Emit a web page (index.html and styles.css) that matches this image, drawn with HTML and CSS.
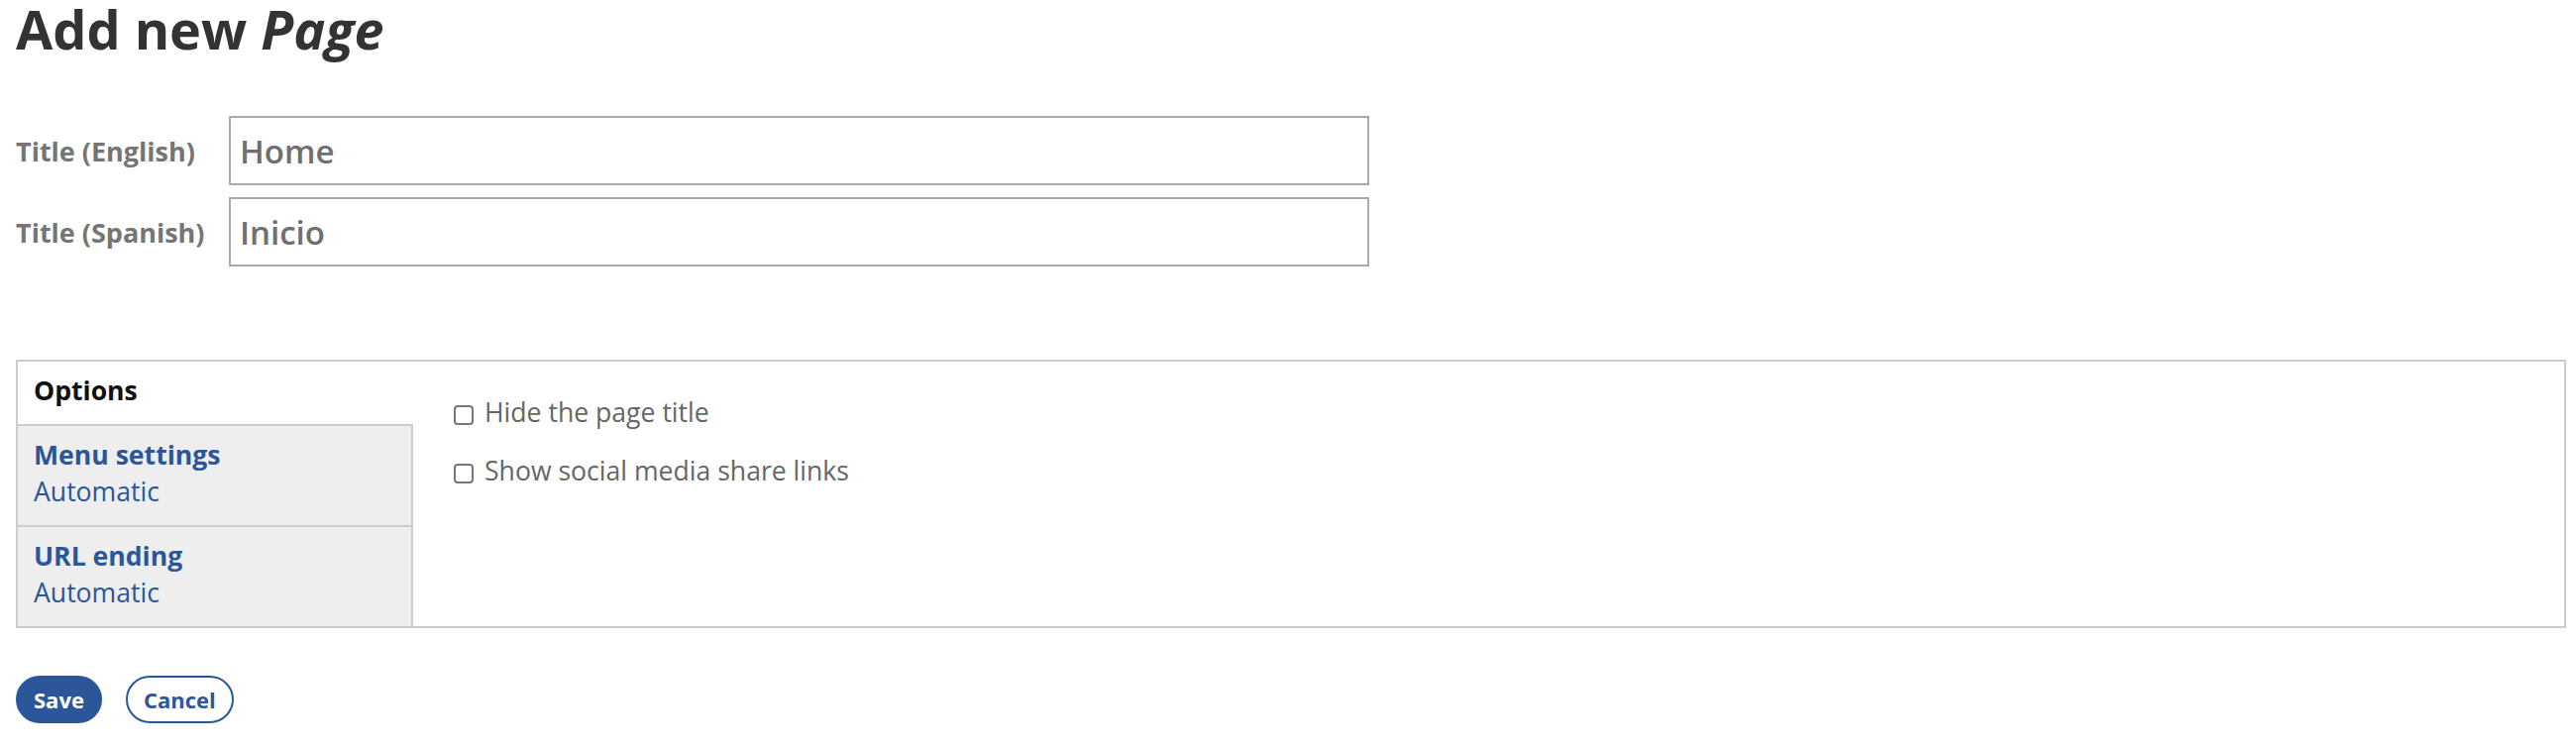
FILE: index.html
```html
<!DOCTYPE html>
<html lang="en">
<head>
  <meta charset="UTF-8" />
  <meta name="viewport" content="width=device-width, initial-scale=1.0"/>
  <title>Add new Page</title>
  <link rel="stylesheet" href="styles.css">
</head>
<body>
  <h1>Add new <em>Page</em></h1>

  <div class="titles">
    <div class="field">
      <label for="title-en">Title (English)</label>
      <input type="text" id="title-en" value="Home"/>
    </div>
    <div class="field">
      <label for="title-es">Title (Spanish)</label>
      <input type="text" id="title-es" value="Inicio"/>
    </div>
  </div>

  <div class="vtabs">
    <ul class="tab-list">
      <li class="tab active"><span class="tab-name">Options</span></li>
      <li class="tab">
        <span class="tab-name">Menu settings</span>
        <span class="tab-summary">Automatic</span>
      </li>
      <li class="tab">
        <span class="tab-name">URL ending</span>
        <span class="tab-summary">Automatic</span>
      </li>
    </ul>
    <div class="tab-pane">
      <label class="check"><input type="checkbox"/> Hide the page title</label>
      <label class="check"><input type="checkbox"/> Show social media share links</label>
    </div>
  </div>

  <div class="actions">
    <button class="btn primary">Save</button>
    <button class="btn">Cancel</button>
  </div>
</body>
</html>
```

FILE: styles.css
```css
* {
  box-sizing: border-box;
}
body {
  margin: 0;
  padding: 0 10px 0 16px;
  font-family: "Open Sans", "Noto Sans", sans-serif;
  font-size: 26.6px;
  color: #333;
  background: #fff;
}
h1 {
  margin: 2px 0 0;
  font-size: 54px;
  line-height: 54px;
  font-weight: 700;
  color: #333;
}
h1 em {
  font-style: italic;
}
.titles {
  margin-top: 61px;
  display: flex;
  flex-direction: column;
  gap: 12px;
}
.field {
  display: flex;
  align-items: center;
}
.field label {
  width: 215px;
  font-size: 27px;
  font-weight: 700;
  color: #757575;
}
.field input {
  width: 1151px;
  height: 70px;
  border: 2px solid #aaa;
  padding: 0 9px;
  font-family: inherit;
  font-size: 33px;
  font-weight: 600;
  color: #6f6f6f;
  background: #fff;
  outline: none;
}
.vtabs {
  margin-top: 94px;
  display: flex;
  border: 2px solid #ccc;
}
.tab-list {
  list-style: none;
  margin: 0;
  padding: 0;
  width: 399px;
  flex-shrink: 0;
  display: flex;
  flex-direction: column;
}
.tab {
  padding: 11px 16px 15px;
  line-height: 37px;
  background: #eee;
  border-right: 2px solid #ccc;
  border-bottom: 2px solid #ccc;
  color: #2b579a;
}
.tab:last-child {
  border-bottom: none;
  flex-grow: 1;
}
.tab.active {
  background: #fff;
  border-right: none;
  color: #111;
}
.tab-name {
  display: block;
  font-weight: 700;
}
.tab-summary {
  display: block;
}
.tab-pane {
  flex: 1;
  padding: 33px 41px;
}
.check {
  display: flex;
  align-items: flex-start;
  gap: 11px;
  line-height: 37px;
  color: #666;
  margin-bottom: 22px;
}
.check input {
  appearance: none;
  margin: 11px 0 0;
  width: 20px;
  height: 20px;
  border: 2px solid #777;
  border-radius: 4px;
  background: #fff;
  flex-shrink: 0;
}
.actions {
  margin-top: 48px;
  display: flex;
  gap: 24px;
}
.btn {
  height: 48px;
  padding: 0 16px;
  border: 2px solid #2b579a;
  border-radius: 24px;
  background: #fff;
  color: #2b579a;
  font-family: inherit;
  font-size: 22px;
  font-weight: 700;
}
.btn.primary {
  background: #2b579a;
  color: #fff;
}
```
